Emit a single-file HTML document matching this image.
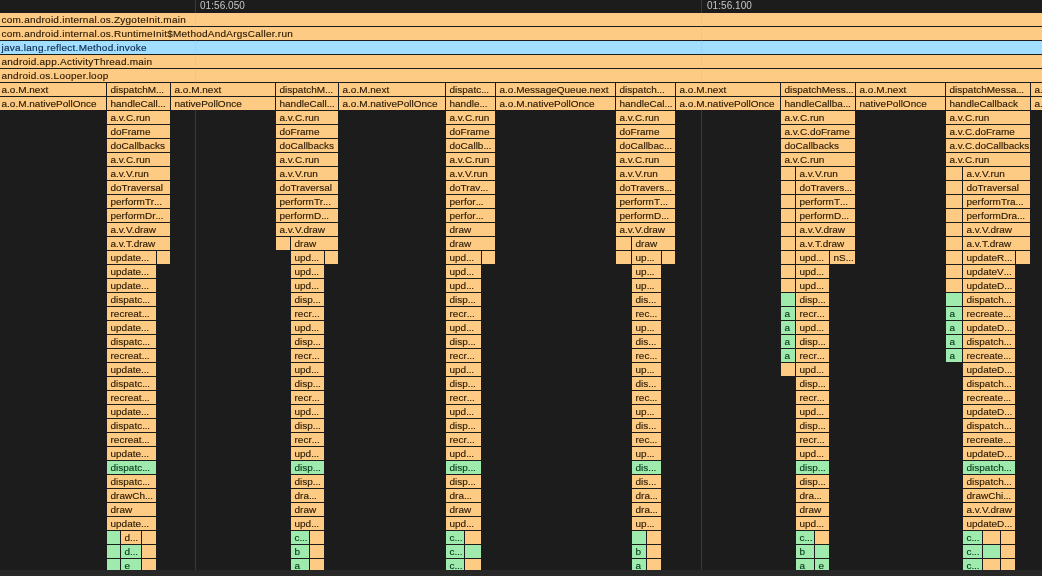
<!DOCTYPE html>
<html><head><meta charset="utf-8"><style>
html,body{margin:0;padding:0;}
body{width:1042px;height:576px;overflow:hidden;position:relative;background:#1c1c1c;font-family:"Liberation Sans",sans-serif;}
div{position:absolute;overflow:hidden;}
#wrap{left:0;top:0;width:1042px;height:576px;will-change:transform;}
.o{background:#fecb84;}
.g{background:#9feaad;}
.b{background:#a2deff;}
.o span,.g span,.b span{position:absolute;top:0;line-height:13px;font-size:10px;white-space:nowrap;transform:scaleY(0.9);transform-origin:0 10px;}
.o span{color:#241500;-webkit-text-stroke:0.22px rgba(44,26,0,0.6);}
.g span{color:#05361a;-webkit-text-stroke:0.22px rgba(5,54,26,0.6);}
.b span{color:#08264a;-webkit-text-stroke:0.22px rgba(8,38,74,0.6);}
i{font-style:normal;letter-spacing:-0.2px;}
.tick{top:-0.5px;height:12px;line-height:12px;font-size:10px;color:#c4c6c8;white-space:nowrap;letter-spacing:0.05px;}
.vl{top:0;width:1px;height:570px;background:#353535;}
.vl2{top:0;width:1px;height:570px;background:rgba(110,110,110,0.08);}
#band{left:0;top:570px;width:1042px;height:6px;background:#282828;}

</style></head><body><div id="wrap">
<div id="hdr1" class="tick" style="left:200px">01:56.050</div>
<div id="hdr2" class="tick" style="left:707px">01:56.100</div>
<div class="vl" style="left:195px"></div>
<div class="vl" style="left:701px"></div>
<div class="o" style="left:0px;top:13px;width:1043px;height:13px"><span style="left:1.5px;letter-spacing:0.24px">com.android.internal.os.ZygoteInit.main</span></div><div class="o" style="left:0px;top:27px;width:1043px;height:13px"><span style="left:1.5px;letter-spacing:0.24px">com.android.internal.os.RuntimeInit$MethodAndArgsCaller.run</span></div><div class="b" style="left:0px;top:41px;width:1043px;height:13px"><span style="left:1.5px;letter-spacing:0.24px">java.lang.reflect.Method.invoke</span></div><div class="o" style="left:0px;top:55px;width:1043px;height:13px"><span style="left:1.5px;letter-spacing:0.24px">android.app.ActivityThread.main</span></div><div class="o" style="left:0px;top:69px;width:1043px;height:13px"><span style="left:1.5px;letter-spacing:0.24px">android.os.Looper.loop</span></div><div class="o" style="left:0px;top:83px;width:106px;height:13px"><span style="left:1.5px">a.o.M.next</span></div><div class="o" style="left:0px;top:97px;width:106px;height:13px"><span style="left:1.5px">a.o.M.nativePollOnce</span></div><div class="o" style="left:107px;top:83px;width:63px;height:13px"><span style="left:3.5px">dispatchM<i>...</i></span></div><div class="o" style="left:107px;top:97px;width:63px;height:13px"><span style="left:3.5px">handleCall<i>...</i></span></div><div class="o" style="left:171px;top:83px;width:104px;height:13px"><span style="left:3.5px">a.o.M.next</span></div><div class="o" style="left:171px;top:97px;width:104px;height:13px"><span style="left:3.5px">nativePollOnce</span></div><div class="o" style="left:276px;top:83px;width:62px;height:13px"><span style="left:3.5px">dispatchM<i>...</i></span></div><div class="o" style="left:276px;top:97px;width:62px;height:13px"><span style="left:3.5px">handleCall<i>...</i></span></div><div class="o" style="left:339px;top:83px;width:106px;height:13px"><span style="left:3.5px">a.o.M.next</span></div><div class="o" style="left:339px;top:97px;width:106px;height:13px"><span style="left:3.5px">a.o.M.nativePollOnce</span></div><div class="o" style="left:446px;top:83px;width:49px;height:13px"><span style="left:3.5px">dispatc<i>...</i></span></div><div class="o" style="left:446px;top:97px;width:49px;height:13px"><span style="left:3.5px">handle<i>...</i></span></div><div class="o" style="left:496px;top:83px;width:119px;height:13px"><span style="left:3.5px">a.o.MessageQueue.next</span></div><div class="o" style="left:496px;top:97px;width:119px;height:13px"><span style="left:3.5px">a.o.M.nativePollOnce</span></div><div class="o" style="left:616px;top:83px;width:59px;height:13px"><span style="left:3.5px">dispatch<i>...</i></span></div><div class="o" style="left:616px;top:97px;width:59px;height:13px"><span style="left:3.5px">handleCal<i>...</i></span></div><div class="o" style="left:676px;top:83px;width:104px;height:13px"><span style="left:3.5px">a.o.M.next</span></div><div class="o" style="left:676px;top:97px;width:104px;height:13px"><span style="left:3.5px">a.o.M.nativePollOnce</span></div><div class="o" style="left:781px;top:83px;width:74px;height:13px"><span style="left:3.5px">dispatchMess<i>...</i></span></div><div class="o" style="left:781px;top:97px;width:74px;height:13px"><span style="left:3.5px">handleCallba<i>...</i></span></div><div class="o" style="left:856px;top:83px;width:89px;height:13px"><span style="left:3.5px">a.o.M.next</span></div><div class="o" style="left:856px;top:97px;width:89px;height:13px"><span style="left:3.5px">nativePollOnce</span></div><div class="o" style="left:946px;top:83px;width:84px;height:13px"><span style="left:3.5px">dispatchMessa<i>...</i></span></div><div class="o" style="left:946px;top:97px;width:84px;height:13px"><span style="left:3.5px">handleCallback</span></div><div class="o" style="left:1031px;top:83px;width:12px;height:13px"><span style="left:3.5px">a.o.M.next</span></div><div class="o" style="left:1031px;top:97px;width:12px;height:13px"><span style="left:3.5px">a.o.M.nativePollOnce</span></div><div class="o" style="left:107px;top:111px;width:63px;height:13px"><span style="left:3.5px">a.v.C.run</span></div><div class="o" style="left:107px;top:125px;width:63px;height:13px"><span style="left:3.5px">doFrame</span></div><div class="o" style="left:107px;top:139px;width:63px;height:13px"><span style="left:3.5px">doCallbacks</span></div><div class="o" style="left:107px;top:153px;width:63px;height:13px"><span style="left:3.5px">a.v.C.run</span></div><div class="o" style="left:107px;top:167px;width:63px;height:13px"><span style="left:3.5px">a.v.V.run</span></div><div class="o" style="left:107px;top:181px;width:63px;height:13px"><span style="left:3.5px">doTraversal</span></div><div class="o" style="left:107px;top:195px;width:63px;height:13px"><span style="left:3.5px">performTr<i>...</i></span></div><div class="o" style="left:107px;top:209px;width:63px;height:13px"><span style="left:3.5px">performDr<i>...</i></span></div><div class="o" style="left:107px;top:223px;width:63px;height:13px"><span style="left:3.5px">a.v.V.draw</span></div><div class="o" style="left:107px;top:237px;width:63px;height:13px"><span style="left:3.5px">a.v.T.draw</span></div><div class="o" style="left:107px;top:251px;width:49px;height:13px"><span style="left:3.5px">update<i>...</i></span></div><div class="o" style="left:157px;top:251px;width:13px;height:13px"></div><div class="o" style="left:107px;top:265px;width:49px;height:13px"><span style="left:3.5px">update<i>...</i></span></div><div class="o" style="left:107px;top:279px;width:49px;height:13px"><span style="left:3.5px">update<i>...</i></span></div><div class="o" style="left:107px;top:293px;width:49px;height:13px"><span style="left:3.5px">dispatc<i>...</i></span></div><div class="o" style="left:107px;top:307px;width:49px;height:13px"><span style="left:3.5px">recreat<i>...</i></span></div><div class="o" style="left:107px;top:321px;width:49px;height:13px"><span style="left:3.5px">update<i>...</i></span></div><div class="o" style="left:107px;top:335px;width:49px;height:13px"><span style="left:3.5px">dispatc<i>...</i></span></div><div class="o" style="left:107px;top:349px;width:49px;height:13px"><span style="left:3.5px">recreat<i>...</i></span></div><div class="o" style="left:107px;top:363px;width:49px;height:13px"><span style="left:3.5px">update<i>...</i></span></div><div class="o" style="left:107px;top:377px;width:49px;height:13px"><span style="left:3.5px">dispatc<i>...</i></span></div><div class="o" style="left:107px;top:391px;width:49px;height:13px"><span style="left:3.5px">recreat<i>...</i></span></div><div class="o" style="left:107px;top:405px;width:49px;height:13px"><span style="left:3.5px">update<i>...</i></span></div><div class="o" style="left:107px;top:419px;width:49px;height:13px"><span style="left:3.5px">dispatc<i>...</i></span></div><div class="o" style="left:107px;top:433px;width:49px;height:13px"><span style="left:3.5px">recreat<i>...</i></span></div><div class="o" style="left:107px;top:447px;width:49px;height:13px"><span style="left:3.5px">update<i>...</i></span></div><div class="g" style="left:107px;top:461px;width:49px;height:13px"><span style="left:3.5px">dispatc<i>...</i></span></div><div class="o" style="left:107px;top:475px;width:49px;height:13px"><span style="left:3.5px">dispatc<i>...</i></span></div><div class="o" style="left:107px;top:489px;width:49px;height:13px"><span style="left:3.5px">drawCh<i>...</i></span></div><div class="o" style="left:107px;top:503px;width:49px;height:13px"><span style="left:3.5px">draw</span></div><div class="o" style="left:107px;top:517px;width:49px;height:13px"><span style="left:3.5px">update<i>...</i></span></div><div class="g" style="left:107px;top:531px;width:13px;height:13px"></div><div class="o" style="left:121px;top:531px;width:20px;height:13px"><span style="left:3.5px">d<i>...</i></span></div><div class="o" style="left:142px;top:531px;width:14px;height:13px"></div><div class="g" style="left:107px;top:545px;width:13px;height:13px"></div><div class="g" style="left:121px;top:545px;width:20px;height:13px"><span style="left:3.5px">d<i>...</i></span></div><div class="o" style="left:142px;top:545px;width:14px;height:13px"></div><div class="g" style="left:107px;top:559px;width:13px;height:11px"></div><div class="g" style="left:121px;top:559px;width:20px;height:11px"><span style="left:3.5px">e</span></div><div class="o" style="left:142px;top:559px;width:14px;height:11px"></div><div class="o" style="left:276px;top:111px;width:62px;height:13px"><span style="left:3.5px">a.v.C.run</span></div><div class="o" style="left:276px;top:125px;width:62px;height:13px"><span style="left:3.5px">doFrame</span></div><div class="o" style="left:276px;top:139px;width:62px;height:13px"><span style="left:3.5px">doCallbacks</span></div><div class="o" style="left:276px;top:153px;width:62px;height:13px"><span style="left:3.5px">a.v.C.run</span></div><div class="o" style="left:276px;top:167px;width:62px;height:13px"><span style="left:3.5px">a.v.V.run</span></div><div class="o" style="left:276px;top:181px;width:62px;height:13px"><span style="left:3.5px">doTraversal</span></div><div class="o" style="left:276px;top:195px;width:62px;height:13px"><span style="left:3.5px">performTr<i>...</i></span></div><div class="o" style="left:276px;top:209px;width:62px;height:13px"><span style="left:3.5px">performD<i>...</i></span></div><div class="o" style="left:276px;top:223px;width:62px;height:13px"><span style="left:3.5px">a.v.V.draw</span></div><div class="o" style="left:276px;top:237px;width:14px;height:13px"></div><div class="o" style="left:291px;top:237px;width:47px;height:13px"><span style="left:3.5px">draw</span></div><div class="o" style="left:291px;top:251px;width:33px;height:13px"><span style="left:3.5px">upd<i>...</i></span></div><div class="o" style="left:325px;top:251px;width:13px;height:13px"></div><div class="o" style="left:291px;top:265px;width:33px;height:13px"><span style="left:3.5px">upd<i>...</i></span></div><div class="o" style="left:291px;top:279px;width:33px;height:13px"><span style="left:3.5px">upd<i>...</i></span></div><div class="o" style="left:291px;top:293px;width:33px;height:13px"><span style="left:3.5px">disp<i>...</i></span></div><div class="o" style="left:291px;top:307px;width:33px;height:13px"><span style="left:3.5px">recr<i>...</i></span></div><div class="o" style="left:291px;top:321px;width:33px;height:13px"><span style="left:3.5px">upd<i>...</i></span></div><div class="o" style="left:291px;top:335px;width:33px;height:13px"><span style="left:3.5px">disp<i>...</i></span></div><div class="o" style="left:291px;top:349px;width:33px;height:13px"><span style="left:3.5px">recr<i>...</i></span></div><div class="o" style="left:291px;top:363px;width:33px;height:13px"><span style="left:3.5px">upd<i>...</i></span></div><div class="o" style="left:291px;top:377px;width:33px;height:13px"><span style="left:3.5px">disp<i>...</i></span></div><div class="o" style="left:291px;top:391px;width:33px;height:13px"><span style="left:3.5px">recr<i>...</i></span></div><div class="o" style="left:291px;top:405px;width:33px;height:13px"><span style="left:3.5px">upd<i>...</i></span></div><div class="o" style="left:291px;top:419px;width:33px;height:13px"><span style="left:3.5px">disp<i>...</i></span></div><div class="o" style="left:291px;top:433px;width:33px;height:13px"><span style="left:3.5px">recr<i>...</i></span></div><div class="o" style="left:291px;top:447px;width:33px;height:13px"><span style="left:3.5px">upd<i>...</i></span></div><div class="g" style="left:291px;top:461px;width:33px;height:13px"><span style="left:3.5px">disp<i>...</i></span></div><div class="o" style="left:291px;top:475px;width:33px;height:13px"><span style="left:3.5px">disp<i>...</i></span></div><div class="o" style="left:291px;top:489px;width:33px;height:13px"><span style="left:3.5px">dra<i>...</i></span></div><div class="o" style="left:291px;top:503px;width:33px;height:13px"><span style="left:3.5px">draw</span></div><div class="o" style="left:291px;top:517px;width:33px;height:13px"><span style="left:3.5px">upd<i>...</i></span></div><div class="g" style="left:291px;top:531px;width:18px;height:13px"><span style="left:3.5px">c<i>...</i></span></div><div class="o" style="left:310px;top:531px;width:14px;height:13px"></div><div class="g" style="left:291px;top:545px;width:18px;height:13px"><span style="left:3.5px">b</span></div><div class="o" style="left:310px;top:545px;width:14px;height:13px"></div><div class="g" style="left:291px;top:559px;width:18px;height:11px"><span style="left:3.5px">a</span></div><div class="o" style="left:310px;top:559px;width:14px;height:11px"></div><div class="o" style="left:446px;top:111px;width:49px;height:13px"><span style="left:3.5px">a.v.C.run</span></div><div class="o" style="left:446px;top:125px;width:49px;height:13px"><span style="left:3.5px">doFrame</span></div><div class="o" style="left:446px;top:139px;width:49px;height:13px"><span style="left:3.5px">doCallb<i>...</i></span></div><div class="o" style="left:446px;top:153px;width:49px;height:13px"><span style="left:3.5px">a.v.C.run</span></div><div class="o" style="left:446px;top:167px;width:49px;height:13px"><span style="left:3.5px">a.v.V.run</span></div><div class="o" style="left:446px;top:181px;width:49px;height:13px"><span style="left:3.5px">doTrav<i>...</i></span></div><div class="o" style="left:446px;top:195px;width:49px;height:13px"><span style="left:3.5px">perfor<i>...</i></span></div><div class="o" style="left:446px;top:209px;width:49px;height:13px"><span style="left:3.5px">perfor<i>...</i></span></div><div class="o" style="left:446px;top:223px;width:49px;height:13px"><span style="left:3.5px">draw</span></div><div class="o" style="left:446px;top:237px;width:49px;height:13px"><span style="left:3.5px">draw</span></div><div class="o" style="left:446px;top:251px;width:35px;height:13px"><span style="left:3.5px">upd<i>...</i></span></div><div class="o" style="left:482px;top:251px;width:13px;height:13px"></div><div class="o" style="left:446px;top:265px;width:35px;height:13px"><span style="left:3.5px">upd<i>...</i></span></div><div class="o" style="left:446px;top:279px;width:35px;height:13px"><span style="left:3.5px">upd<i>...</i></span></div><div class="o" style="left:446px;top:293px;width:35px;height:13px"><span style="left:3.5px">disp<i>...</i></span></div><div class="o" style="left:446px;top:307px;width:35px;height:13px"><span style="left:3.5px">recr<i>...</i></span></div><div class="o" style="left:446px;top:321px;width:35px;height:13px"><span style="left:3.5px">upd<i>...</i></span></div><div class="o" style="left:446px;top:335px;width:35px;height:13px"><span style="left:3.5px">disp<i>...</i></span></div><div class="o" style="left:446px;top:349px;width:35px;height:13px"><span style="left:3.5px">recr<i>...</i></span></div><div class="o" style="left:446px;top:363px;width:35px;height:13px"><span style="left:3.5px">upd<i>...</i></span></div><div class="o" style="left:446px;top:377px;width:35px;height:13px"><span style="left:3.5px">disp<i>...</i></span></div><div class="o" style="left:446px;top:391px;width:35px;height:13px"><span style="left:3.5px">recr<i>...</i></span></div><div class="o" style="left:446px;top:405px;width:35px;height:13px"><span style="left:3.5px">upd<i>...</i></span></div><div class="o" style="left:446px;top:419px;width:35px;height:13px"><span style="left:3.5px">disp<i>...</i></span></div><div class="o" style="left:446px;top:433px;width:35px;height:13px"><span style="left:3.5px">recr<i>...</i></span></div><div class="o" style="left:446px;top:447px;width:35px;height:13px"><span style="left:3.5px">upd<i>...</i></span></div><div class="g" style="left:446px;top:461px;width:35px;height:13px"><span style="left:3.5px">disp<i>...</i></span></div><div class="o" style="left:446px;top:475px;width:35px;height:13px"><span style="left:3.5px">disp<i>...</i></span></div><div class="o" style="left:446px;top:489px;width:35px;height:13px"><span style="left:3.5px">dra<i>...</i></span></div><div class="o" style="left:446px;top:503px;width:35px;height:13px"><span style="left:3.5px">draw</span></div><div class="o" style="left:446px;top:517px;width:35px;height:13px"><span style="left:3.5px">upd<i>...</i></span></div><div class="g" style="left:446px;top:531px;width:18px;height:13px"><span style="left:3.5px">c<i>...</i></span></div><div class="o" style="left:465px;top:531px;width:16px;height:13px"></div><div class="g" style="left:446px;top:545px;width:18px;height:13px"><span style="left:3.5px">c<i>...</i></span></div><div class="g" style="left:465px;top:545px;width:16px;height:13px"></div><div class="g" style="left:446px;top:559px;width:18px;height:11px"><span style="left:3.5px">c<i>...</i></span></div><div class="o" style="left:465px;top:559px;width:16px;height:11px"></div><div class="o" style="left:616px;top:111px;width:59px;height:13px"><span style="left:3.5px">a.v.C.run</span></div><div class="o" style="left:616px;top:125px;width:59px;height:13px"><span style="left:3.5px">doFrame</span></div><div class="o" style="left:616px;top:139px;width:59px;height:13px"><span style="left:3.5px">doCallbac<i>...</i></span></div><div class="o" style="left:616px;top:153px;width:59px;height:13px"><span style="left:3.5px">a.v.C.run</span></div><div class="o" style="left:616px;top:167px;width:59px;height:13px"><span style="left:3.5px">a.v.V.run</span></div><div class="o" style="left:616px;top:181px;width:59px;height:13px"><span style="left:3.5px">doTravers<i>...</i></span></div><div class="o" style="left:616px;top:195px;width:59px;height:13px"><span style="left:3.5px">performT<i>...</i></span></div><div class="o" style="left:616px;top:209px;width:59px;height:13px"><span style="left:3.5px">performD<i>...</i></span></div><div class="o" style="left:616px;top:223px;width:59px;height:13px"><span style="left:3.5px">a.v.V.draw</span></div><div class="o" style="left:616px;top:237px;width:15px;height:13px"></div><div class="o" style="left:632px;top:237px;width:43px;height:13px"><span style="left:3.5px">draw</span></div><div class="o" style="left:616px;top:251px;width:15px;height:13px"></div><div class="o" style="left:632px;top:251px;width:29px;height:13px"><span style="left:3.5px">up<i>...</i></span></div><div class="o" style="left:662px;top:251px;width:13px;height:13px"></div><div class="o" style="left:632px;top:265px;width:29px;height:13px"><span style="left:3.5px">up<i>...</i></span></div><div class="o" style="left:632px;top:279px;width:29px;height:13px"><span style="left:3.5px">up<i>...</i></span></div><div class="o" style="left:632px;top:293px;width:29px;height:13px"><span style="left:3.5px">dis<i>...</i></span></div><div class="o" style="left:632px;top:307px;width:29px;height:13px"><span style="left:3.5px">rec<i>...</i></span></div><div class="o" style="left:632px;top:321px;width:29px;height:13px"><span style="left:3.5px">up<i>...</i></span></div><div class="o" style="left:632px;top:335px;width:29px;height:13px"><span style="left:3.5px">dis<i>...</i></span></div><div class="o" style="left:632px;top:349px;width:29px;height:13px"><span style="left:3.5px">rec<i>...</i></span></div><div class="o" style="left:632px;top:363px;width:29px;height:13px"><span style="left:3.5px">up<i>...</i></span></div><div class="o" style="left:632px;top:377px;width:29px;height:13px"><span style="left:3.5px">dis<i>...</i></span></div><div class="o" style="left:632px;top:391px;width:29px;height:13px"><span style="left:3.5px">rec<i>...</i></span></div><div class="o" style="left:632px;top:405px;width:29px;height:13px"><span style="left:3.5px">up<i>...</i></span></div><div class="o" style="left:632px;top:419px;width:29px;height:13px"><span style="left:3.5px">dis<i>...</i></span></div><div class="o" style="left:632px;top:433px;width:29px;height:13px"><span style="left:3.5px">rec<i>...</i></span></div><div class="o" style="left:632px;top:447px;width:29px;height:13px"><span style="left:3.5px">up<i>...</i></span></div><div class="g" style="left:632px;top:461px;width:29px;height:13px"><span style="left:3.5px">dis<i>...</i></span></div><div class="o" style="left:632px;top:475px;width:29px;height:13px"><span style="left:3.5px">dis<i>...</i></span></div><div class="o" style="left:632px;top:489px;width:29px;height:13px"><span style="left:3.5px">dra<i>...</i></span></div><div class="o" style="left:632px;top:503px;width:29px;height:13px"><span style="left:3.5px">dra<i>...</i></span></div><div class="o" style="left:632px;top:517px;width:29px;height:13px"><span style="left:3.5px">up<i>...</i></span></div><div class="g" style="left:632px;top:531px;width:14px;height:13px"></div><div class="o" style="left:647px;top:531px;width:14px;height:13px"></div><div class="g" style="left:632px;top:545px;width:14px;height:13px"><span style="left:3.5px">b</span></div><div class="o" style="left:647px;top:545px;width:14px;height:13px"></div><div class="g" style="left:632px;top:559px;width:14px;height:11px"><span style="left:3.5px">a</span></div><div class="o" style="left:647px;top:559px;width:14px;height:11px"></div><div class="o" style="left:781px;top:111px;width:74px;height:13px"><span style="left:3.5px">a.v.C.run</span></div><div class="o" style="left:781px;top:125px;width:74px;height:13px"><span style="left:3.5px">a.v.C.doFrame</span></div><div class="o" style="left:781px;top:139px;width:74px;height:13px"><span style="left:3.5px">doCallbacks</span></div><div class="o" style="left:781px;top:153px;width:74px;height:13px"><span style="left:3.5px">a.v.C.run</span></div><div class="o" style="left:781px;top:167px;width:14px;height:13px"></div><div class="o" style="left:781px;top:181px;width:14px;height:13px"></div><div class="o" style="left:781px;top:195px;width:14px;height:13px"></div><div class="o" style="left:781px;top:209px;width:14px;height:13px"></div><div class="o" style="left:781px;top:223px;width:14px;height:13px"></div><div class="o" style="left:781px;top:237px;width:14px;height:13px"></div><div class="o" style="left:781px;top:251px;width:14px;height:13px"></div><div class="o" style="left:781px;top:265px;width:14px;height:13px"></div><div class="o" style="left:781px;top:279px;width:14px;height:13px"></div><div class="g" style="left:781px;top:293px;width:14px;height:13px"></div><div class="g" style="left:781px;top:307px;width:14px;height:13px"><span style="left:3.5px">a</span></div><div class="g" style="left:781px;top:321px;width:14px;height:13px"><span style="left:3.5px">a</span></div><div class="g" style="left:781px;top:335px;width:14px;height:13px"><span style="left:3.5px">a</span></div><div class="g" style="left:781px;top:349px;width:14px;height:13px"><span style="left:3.5px">a</span></div><div class="o" style="left:781px;top:363px;width:14px;height:13px"></div><div class="o" style="left:796px;top:167px;width:59px;height:13px"><span style="left:3.5px">a.v.V.run</span></div><div class="o" style="left:796px;top:181px;width:59px;height:13px"><span style="left:3.5px">doTravers<i>...</i></span></div><div class="o" style="left:796px;top:195px;width:59px;height:13px"><span style="left:3.5px">performT<i>...</i></span></div><div class="o" style="left:796px;top:209px;width:59px;height:13px"><span style="left:3.5px">performD<i>...</i></span></div><div class="o" style="left:796px;top:223px;width:59px;height:13px"><span style="left:3.5px">a.v.V.draw</span></div><div class="o" style="left:796px;top:237px;width:59px;height:13px"><span style="left:3.5px">a.v.T.draw</span></div><div class="o" style="left:796px;top:251px;width:33px;height:13px"><span style="left:3.5px">upd<i>...</i></span></div><div class="o" style="left:830px;top:251px;width:25px;height:13px"><span style="left:3.5px">nS<i>...</i></span></div><div class="o" style="left:796px;top:265px;width:33px;height:13px"><span style="left:3.5px">upd<i>...</i></span></div><div class="o" style="left:796px;top:279px;width:33px;height:13px"><span style="left:3.5px">upd<i>...</i></span></div><div class="o" style="left:796px;top:293px;width:33px;height:13px"><span style="left:3.5px">disp<i>...</i></span></div><div class="o" style="left:796px;top:307px;width:33px;height:13px"><span style="left:3.5px">recr<i>...</i></span></div><div class="o" style="left:796px;top:321px;width:33px;height:13px"><span style="left:3.5px">upd<i>...</i></span></div><div class="o" style="left:796px;top:335px;width:33px;height:13px"><span style="left:3.5px">disp<i>...</i></span></div><div class="o" style="left:796px;top:349px;width:33px;height:13px"><span style="left:3.5px">recr<i>...</i></span></div><div class="o" style="left:796px;top:363px;width:33px;height:13px"><span style="left:3.5px">upd<i>...</i></span></div><div class="o" style="left:796px;top:377px;width:33px;height:13px"><span style="left:3.5px">disp<i>...</i></span></div><div class="o" style="left:796px;top:391px;width:33px;height:13px"><span style="left:3.5px">recr<i>...</i></span></div><div class="o" style="left:796px;top:405px;width:33px;height:13px"><span style="left:3.5px">upd<i>...</i></span></div><div class="o" style="left:796px;top:419px;width:33px;height:13px"><span style="left:3.5px">disp<i>...</i></span></div><div class="o" style="left:796px;top:433px;width:33px;height:13px"><span style="left:3.5px">recr<i>...</i></span></div><div class="o" style="left:796px;top:447px;width:33px;height:13px"><span style="left:3.5px">upd<i>...</i></span></div><div class="g" style="left:796px;top:461px;width:33px;height:13px"><span style="left:3.5px">disp<i>...</i></span></div><div class="o" style="left:796px;top:475px;width:33px;height:13px"><span style="left:3.5px">disp<i>...</i></span></div><div class="o" style="left:796px;top:489px;width:33px;height:13px"><span style="left:3.5px">dra<i>...</i></span></div><div class="o" style="left:796px;top:503px;width:33px;height:13px"><span style="left:3.5px">draw</span></div><div class="o" style="left:796px;top:517px;width:33px;height:13px"><span style="left:3.5px">upd<i>...</i></span></div><div class="g" style="left:796px;top:531px;width:18px;height:13px"><span style="left:3.5px">c<i>...</i></span></div><div class="o" style="left:815px;top:531px;width:14px;height:13px"></div><div class="g" style="left:796px;top:545px;width:18px;height:13px"><span style="left:3.5px">b</span></div><div class="g" style="left:815px;top:545px;width:14px;height:13px"></div><div class="g" style="left:796px;top:559px;width:18px;height:11px"><span style="left:3.5px">a</span></div><div class="g" style="left:815px;top:559px;width:14px;height:11px"><span style="left:3.5px">e</span></div><div class="o" style="left:946px;top:111px;width:84px;height:13px"><span style="left:3.5px">a.v.C.run</span></div><div class="o" style="left:946px;top:125px;width:84px;height:13px"><span style="left:3.5px">a.v.C.doFrame</span></div><div class="o" style="left:946px;top:139px;width:84px;height:13px"><span style="left:3.5px">a.v.C.doCallbacks</span></div><div class="o" style="left:946px;top:153px;width:84px;height:13px"><span style="left:3.5px">a.v.C.run</span></div><div class="o" style="left:946px;top:167px;width:16px;height:13px"></div><div class="o" style="left:946px;top:181px;width:16px;height:13px"></div><div class="o" style="left:946px;top:195px;width:16px;height:13px"></div><div class="o" style="left:946px;top:209px;width:16px;height:13px"></div><div class="o" style="left:946px;top:223px;width:16px;height:13px"></div><div class="o" style="left:946px;top:237px;width:16px;height:13px"></div><div class="o" style="left:946px;top:251px;width:16px;height:13px"></div><div class="o" style="left:946px;top:265px;width:16px;height:13px"></div><div class="o" style="left:946px;top:279px;width:16px;height:13px"></div><div class="g" style="left:946px;top:293px;width:16px;height:13px"></div><div class="g" style="left:946px;top:307px;width:16px;height:13px"><span style="left:3.5px">a</span></div><div class="g" style="left:946px;top:321px;width:16px;height:13px"><span style="left:3.5px">a</span></div><div class="g" style="left:946px;top:335px;width:16px;height:13px"><span style="left:3.5px">a</span></div><div class="g" style="left:946px;top:349px;width:16px;height:13px"><span style="left:3.5px">a</span></div><div class="o" style="left:963px;top:167px;width:67px;height:13px"><span style="left:3.5px">a.v.V.run</span></div><div class="o" style="left:963px;top:181px;width:67px;height:13px"><span style="left:3.5px">doTraversal</span></div><div class="o" style="left:963px;top:195px;width:67px;height:13px"><span style="left:3.5px">performTra<i>...</i></span></div><div class="o" style="left:963px;top:209px;width:67px;height:13px"><span style="left:3.5px">performDra<i>...</i></span></div><div class="o" style="left:963px;top:223px;width:67px;height:13px"><span style="left:3.5px">a.v.V.draw</span></div><div class="o" style="left:963px;top:237px;width:67px;height:13px"><span style="left:3.5px">a.v.T.draw</span></div><div class="o" style="left:963px;top:251px;width:52px;height:13px"><span style="left:3.5px">updateR<i>...</i></span></div><div class="o" style="left:1016px;top:251px;width:14px;height:13px"></div><div class="o" style="left:963px;top:265px;width:52px;height:13px"><span style="left:3.5px">updateV<i>...</i></span></div><div class="o" style="left:963px;top:279px;width:52px;height:13px"><span style="left:3.5px">updateD<i>...</i></span></div><div class="o" style="left:963px;top:293px;width:52px;height:13px"><span style="left:3.5px">dispatch<i>...</i></span></div><div class="o" style="left:963px;top:307px;width:52px;height:13px"><span style="left:3.5px">recreate<i>...</i></span></div><div class="o" style="left:963px;top:321px;width:52px;height:13px"><span style="left:3.5px">updateD<i>...</i></span></div><div class="o" style="left:963px;top:335px;width:52px;height:13px"><span style="left:3.5px">dispatch<i>...</i></span></div><div class="o" style="left:963px;top:349px;width:52px;height:13px"><span style="left:3.5px">recreate<i>...</i></span></div><div class="o" style="left:963px;top:363px;width:52px;height:13px"><span style="left:3.5px">updateD<i>...</i></span></div><div class="o" style="left:963px;top:377px;width:52px;height:13px"><span style="left:3.5px">dispatch<i>...</i></span></div><div class="o" style="left:963px;top:391px;width:52px;height:13px"><span style="left:3.5px">recreate<i>...</i></span></div><div class="o" style="left:963px;top:405px;width:52px;height:13px"><span style="left:3.5px">updateD<i>...</i></span></div><div class="o" style="left:963px;top:419px;width:52px;height:13px"><span style="left:3.5px">dispatch<i>...</i></span></div><div class="o" style="left:963px;top:433px;width:52px;height:13px"><span style="left:3.5px">recreate<i>...</i></span></div><div class="o" style="left:963px;top:447px;width:52px;height:13px"><span style="left:3.5px">updateD<i>...</i></span></div><div class="g" style="left:963px;top:461px;width:52px;height:13px"><span style="left:3.5px">dispatch<i>...</i></span></div><div class="o" style="left:963px;top:475px;width:52px;height:13px"><span style="left:3.5px">dispatch<i>...</i></span></div><div class="o" style="left:963px;top:489px;width:52px;height:13px"><span style="left:3.5px">drawChi<i>...</i></span></div><div class="o" style="left:963px;top:503px;width:52px;height:13px"><span style="left:3.5px">a.v.V.draw</span></div><div class="o" style="left:963px;top:517px;width:52px;height:13px"><span style="left:3.5px">updateD<i>...</i></span></div><div class="g" style="left:963px;top:531px;width:19px;height:13px"><span style="left:3.5px">c<i>...</i></span></div><div class="o" style="left:983px;top:531px;width:17px;height:13px"></div><div class="o" style="left:1001px;top:531px;width:14px;height:13px"></div><div class="g" style="left:963px;top:545px;width:19px;height:13px"><span style="left:3.5px">c<i>...</i></span></div><div class="g" style="left:983px;top:545px;width:17px;height:13px"></div><div class="o" style="left:1001px;top:545px;width:14px;height:13px"></div><div class="g" style="left:963px;top:559px;width:19px;height:11px"><span style="left:3.5px">c<i>...</i></span></div><div class="o" style="left:983px;top:559px;width:17px;height:11px"></div><div class="o" style="left:1001px;top:559px;width:14px;height:11px"></div>
<div class="vl2" style="left:195px"></div>
<div class="vl2" style="left:701px"></div>
<div id="band"></div>
</div></body></html>
